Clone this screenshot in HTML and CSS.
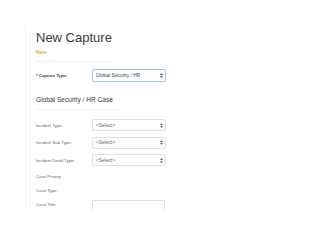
FILE: index.html
```html
<!DOCTYPE html>
<html lang="en">
<head>
    <meta charset="UTF-8">
    <meta name="viewport" content="width=device-width, initial-scale=1.0">
    <title>New Capture</title>
    <link rel="stylesheet" href="styles.css">
</head>
<body>
    <div class="page">
        <h1 class="title">New Capture</h1>
        <p class="subtitle">New</p>
        <div class="rule"></div>

        <!-- capture type -->
        <div class="row row-capture">
            <label class="label label-req">* Capture Type:</label>
            <div class="select select-focus">
                <span class="select-text">Global Security / HR</span>
                <svg class="arrows" width="3" height="5" viewBox="0 0 3 5"><path d="M1.5 0 L3 2 H0 Z M0 3 H3 L1.5 5 Z" fill="#555"/></svg>
            </div>
        </div>

        <h2 class="section">Global Security / HR Case</h2>
        <div class="rule rule-wide"></div>

        <!-- case fields -->
        <div class="row row-select">
            <label class="label">Incident Type:</label>
            <div class="select">
                <span class="select-text">&lt;Select&gt;</span>
                <svg class="arrows" width="3" height="5" viewBox="0 0 3 5"><path d="M1.5 0 L3 2 H0 Z M0 3 H3 L1.5 5 Z" fill="#666"/></svg>
            </div>
        </div>
        <div class="row row-select">
            <label class="label">Incident Sub-Type:</label>
            <div class="select">
                <span class="select-text">&lt;Select&gt;</span>
                <svg class="arrows" width="3" height="5" viewBox="0 0 3 5"><path d="M1.5 0 L3 2 H0 Z M0 3 H3 L1.5 5 Z" fill="#666"/></svg>
            </div>
        </div>
        <div class="row row-select row-last-select">
            <label class="label">Incident Detail Type:</label>
            <div class="select">
                <span class="select-text">&lt;Select&gt;</span>
                <svg class="arrows" width="3" height="5" viewBox="0 0 3 5"><path d="M1.5 0 L3 2 H0 Z M0 3 H3 L1.5 5 Z" fill="#666"/></svg>
            </div>
        </div>
        <div class="row row-plain">
            <label class="label">Case Priority:</label>
        </div>
        <div class="row row-plain">
            <label class="label">Case Type:</label>
        </div>
        <div class="row row-plain">
            <label class="label">Case Title:</label>
            <div class="input"></div>
        </div>
    </div>
</body>
</html>
```

FILE: styles.css
```css
body {
    margin: 0;
    background: #fff;
    font-family: "Liberation Sans", Arial, Helvetica, sans-serif;
    color: #333;
}

/* panel with the thin left border, cut off at the bottom */
.page {
    margin: 26px 0 0 25px;
    height: 184px;
    overflow: hidden;
    border-left: 1px solid #f0f0f0;
    padding: 4px 0 0 10px;
    box-sizing: border-box;
}

.title {
    margin: 0;
    font-size: 13px;
    line-height: 15px;
    font-weight: normal;
    color: #3a3a3a;
}

.subtitle {
    margin: 4px 0 0;
    font-size: 5px;
    line-height: 6px;
    font-weight: bold;
    color: #eda456;
}

.rule {
    width: 77px;
    margin-top: 6px;
    border-top: 1px solid #f0f0f0;
}

.rule-wide {
    width: 85px;
    margin-top: 5px;
}

.section {
    margin: 14px 0 0;
    font-size: 6.6px;
    line-height: 8px;
    font-weight: normal;
    color: #3a3a3a;
}

.row {
    display: flex;
    align-items: center;
    height: 12px;
}

.row-capture {
    height: 13px;
    margin-top: 7px;
}

.row-select {
    margin-top: 5.5px;
}

.rule + .row-select {
    margin-top: 9px;
}

.row-plain {
    margin-top: 2px;
}

.row-last-select + .row-plain {
    margin-top: 4.5px;
}

.label {
    width: 56px;
    flex: none;
    font-size: 4.3px;
    color: #666;
}

.label-req {
    font-weight: bold;
    color: #444;
}

.select {
    position: relative;
    width: 74px;
    height: 100%;
    box-sizing: border-box;
    border: 1px solid #e0e0e0;
    border-radius: 2px;
    display: flex;
    align-items: center;
    padding-left: 3px;
}

.select-focus {
    border-color: #a3c7ec;
    box-shadow: 0 0 1px #c6ddf4;
}

.select-text {
    font-size: 4.9px;
    color: #666;
}

.select-focus .select-text {
    color: #444;
}

.arrows {
    position: absolute;
    right: 2px;
    top: 50%;
    margin-top: -2.5px;
}

.input {
    width: 73px;
    height: 13px;
    margin-top: 1px;
    box-sizing: border-box;
    border: 1px solid #e0e0e0;
    border-radius: 1px;
    align-self: flex-start;
}
```
